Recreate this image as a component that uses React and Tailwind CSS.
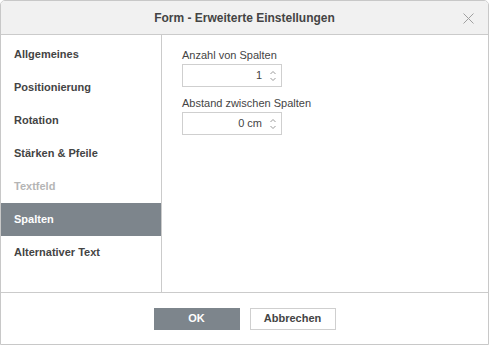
import React from 'react';

const items = [
    { label: 'Allgemeines' },
    { label: 'Positionierung' },
    { label: 'Rotation' },
    { label: 'Stärken & Pfeile' },
    { label: 'Textfeld', disabled: true },
    { label: 'Spalten', active: true },
    { label: 'Alternativer Text' },
];

function Spinner({ value }) {
    return (
        <div className="flex h-[23px] w-[100px] items-center border border-[#cfcfcf] bg-white">
            <span className="flex-1 pr-[5px] text-right text-[11px] text-[#444]">{value}</span>
            <div className="flex w-[14px] flex-col items-center justify-center gap-[4px] pr-[3px]">
                <svg width="6" height="3" viewBox="0 0 6 3">
                    <path d="M0.5 3 L3 0.5 L5.5 3" fill="none" stroke="#999" strokeWidth="1" />
                </svg>
                <svg width="6" height="3" viewBox="0 0 6 3">
                    <path d="M0.5 0 L3 2.5 L5.5 0" fill="none" stroke="#999" strokeWidth="1" />
                </svg>
            </div>
        </div>
    );
}

export default function App() {
    return (
        <div className="h-[345px] w-[489px] bg-white" style={{ fontFamily: '"Liberation Sans", Arial, sans-serif' }}>
            <div className="flex h-full flex-col overflow-hidden rounded-t-[5px] border border-[#c8c8c8]">
                <div className="relative flex h-[34px] shrink-0 items-center justify-center border-b border-[#cbcbcb] bg-[#f1f1f1]">
                    <span className="text-[12px] font-bold text-[#444]">Form - Erweiterte Einstellungen</span>
                    <svg className="absolute right-[14px] top-[12px]" width="11" height="11" viewBox="0 0 11 11">
                        <path d="M0.5 0.5 L10.5 10.5 M10.5 0.5 L0.5 10.5" stroke="#a0a0a0" strokeWidth="1" />
                    </svg>
                </div>
                <div className="flex flex-1">
                    <div className="w-[161px] shrink-0 border-r border-[#cbcbcb] pt-[3px]">
                        {items.map((it) => (
                            <div
                                key={it.label}
                                className={
                                    'flex h-[33px] items-center pl-[13px] text-[11px] font-bold ' +
                                    (it.active ? 'bg-[#7d858c] text-white' : it.disabled ? 'text-[#b5b5b5]' : 'text-[#444]')
                                }
                            >
                                {it.label}
                            </div>
                        ))}
                    </div>
                    <div className="flex flex-col pl-[20px] pt-[12px]">
                        <span className="text-[11px] leading-[17px] text-[#444]">Anzahl von Spalten</span>
                        <Spinner value="1" />
                        <span className="mt-[8px] text-[11px] leading-[17px] text-[#444]">Abstand zwischen Spalten</span>
                        <Spinner value="0 cm" />
                    </div>
                </div>
                <div className="flex h-[52px] shrink-0 items-center justify-center gap-[10px] border-t border-[#cbcbcb]">
                    <button className="h-[22px] w-[86px] bg-[#7d858c] text-[11px] font-bold text-white">OK</button>
                    <button className="h-[22px] w-[86px] border border-[#cfcfcf] bg-white text-[11px] font-bold text-[#444]">
                        Abbrechen
                    </button>
                </div>
            </div>
        </div>
    );
}
